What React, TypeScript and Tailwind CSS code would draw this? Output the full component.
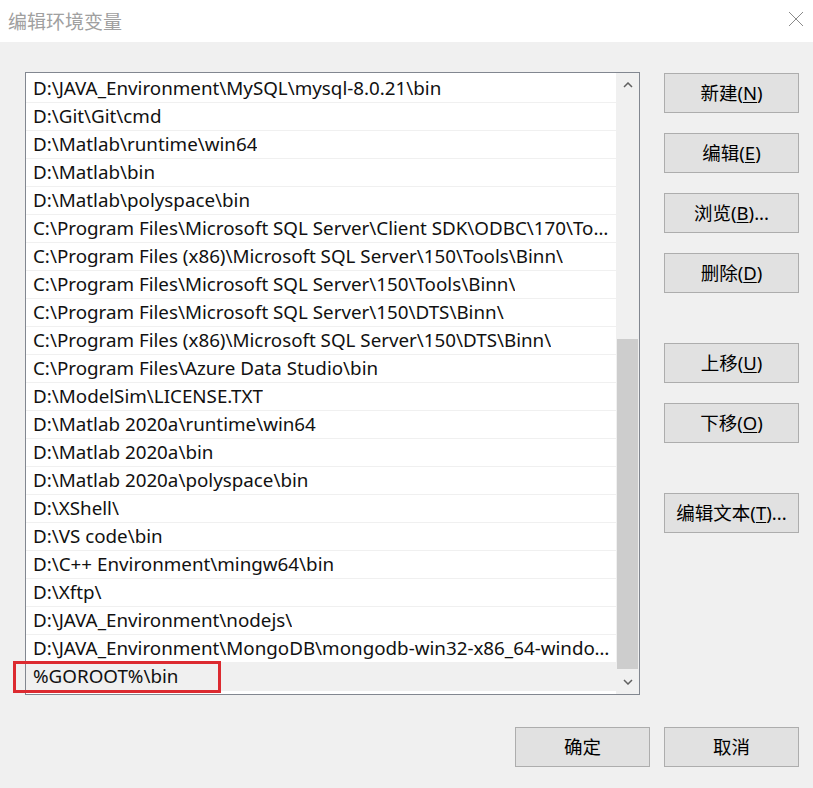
import React from 'react';

const paths = [
  'D:\\JAVA_Environment\\MySQL\\mysql-8.0.21\\bin',
  'D:\\Git\\Git\\cmd',
  'D:\\Matlab\\runtime\\win64',
  'D:\\Matlab\\bin',
  'D:\\Matlab\\polyspace\\bin',
  'C:\\Program Files\\Microsoft SQL Server\\Client SDK\\ODBC\\170\\Tools\\Binn\\',
  'C:\\Program Files (x86)\\Microsoft SQL Server\\150\\Tools\\Binn\\',
  'C:\\Program Files\\Microsoft SQL Server\\150\\Tools\\Binn\\',
  'C:\\Program Files\\Microsoft SQL Server\\150\\DTS\\Binn\\',
  'C:\\Program Files (x86)\\Microsoft SQL Server\\150\\DTS\\Binn\\',
  'C:\\Program Files\\Azure Data Studio\\bin',
  'D:\\ModelSim\\LICENSE.TXT',
  'D:\\Matlab 2020a\\runtime\\win64',
  'D:\\Matlab 2020a\\bin',
  'D:\\Matlab 2020a\\polyspace\\bin',
  'D:\\XShell\\',
  'D:\\VS code\\bin',
  'D:\\C++ Environment\\mingw64\\bin',
  'D:\\Xftp\\',
  'D:\\JAVA_Environment\\nodejs\\',
  'D:\\JAVA_Environment\\MongoDB\\mongodb-win32-x86_64-windows-4.4.3\\bin',
  '%GOROOT%\\bin',
];

const FONT = '"Noto Sans", "Noto Sans CJK SC", sans-serif';

const WinButton: React.FC<{ label: string; hotkey?: string; suffix?: string; className?: string }> = ({
  label,
  hotkey,
  suffix = '',
  className = '',
}) => (
  <div
    className={
      'w-[135px] h-[40px] flex items-center justify-center border border-[#adadad] bg-[#e1e1e1] text-[18.5px] text-black ' +
      className
    }
  >
    <span>
      {label}
      {hotkey && (
        <>
          (<span className="underline underline-offset-2">{hotkey}</span>)
        </>
      )}
      {suffix}
    </span>
  </div>
);

const App: React.FC = () => {
  return (
    <div className="w-[813px] h-[788px] bg-[#f0f0f0] relative overflow-hidden" style={{ fontFamily: FONT }}>
      {/* Title bar */}
      <div className="h-[42px] bg-white flex items-center justify-between">
        <span className="pl-[8px] text-[19px] text-[#a0a0a0]" style={{ fontFamily: '"Noto Sans CJK SC", sans-serif' }}>
          编辑环境变量
        </span>
        <svg width="16" height="16" viewBox="0 0 16 16" className="mr-[9px] mt-[-4px]">
          <path d="M1 1 L15 15 M15 1 L1 15" stroke="#8a8a8a" strokeWidth="1" fill="none" />
        </svg>
      </div>

      {/* Main area */}
      <div className="flex pl-[25px] pt-[30px] gap-[24px]">
        {/* List */}
        <div className="w-[615px] h-[623px] border border-[#828790] bg-white flex relative">
          <div className="flex-1 flex flex-col pt-[2px] min-w-0">
            {paths.map((p, i) => (
              <div
                key={i}
                className={
                  'h-[28px] shrink-0 flex items-center pl-[7px] pr-[2px] border-b border-[#f0f0f0] text-[18.8px] text-[#111] ' +
                  (i === paths.length - 1 ? 'bg-[#f0f0f0]' : '')
                }
              >
                <span className="truncate">{p}</span>
              </div>
            ))}
          </div>
          {/* Scrollbar */}
          <div className="w-[23px] bg-[#f0f0f0] flex flex-col">
            <div className="h-[24px] flex items-center justify-center">
              <svg width="10" height="6" viewBox="0 0 10 6">
                <path d="M1 5 L5 1 L9 5" stroke="#606060" strokeWidth="1.5" fill="none" />
              </svg>
            </div>
            <div className="flex-1 flex flex-col">
              <div className="h-[242px]" />
              <div className="mx-[1px] h-[330px] bg-[#cdcdcd]" />
            </div>
            <div className="h-[25px] flex items-center justify-center">
              <svg width="10" height="6" viewBox="0 0 10 6">
                <path d="M1 1 L5 5 L9 1" stroke="#606060" strokeWidth="1.5" fill="none" />
              </svg>
            </div>
          </div>
        </div>

        {/* Right buttons */}
        <div className="flex flex-col pt-[1px]">
          <WinButton label="新建" hotkey="N" />
          <WinButton label="编辑" hotkey="E" className="mt-[20px]" />
          <WinButton label="浏览" hotkey="B" suffix="..." className="mt-[20px]" />
          <WinButton label="删除" hotkey="D" className="mt-[20px]" />
          <WinButton label="上移" hotkey="U" className="mt-[50px]" />
          <WinButton label="下移" hotkey="O" className="mt-[20px]" />
          <WinButton label="编辑文本" hotkey="T" suffix="..." className="mt-[50px]" />
        </div>
      </div>

      {/* Bottom buttons */}
      <div className="flex justify-end gap-[14px] pr-[14px] mt-[32px]">
        <WinButton label="确定" />
        <WinButton label="取消" />
      </div>

      {/* Red highlight box */}
      <div className="absolute left-[13px] top-[661px] w-[208px] h-[32px] border-[3px] border-[#dc2a30]" />
    </div>
  );
};

export default App;
